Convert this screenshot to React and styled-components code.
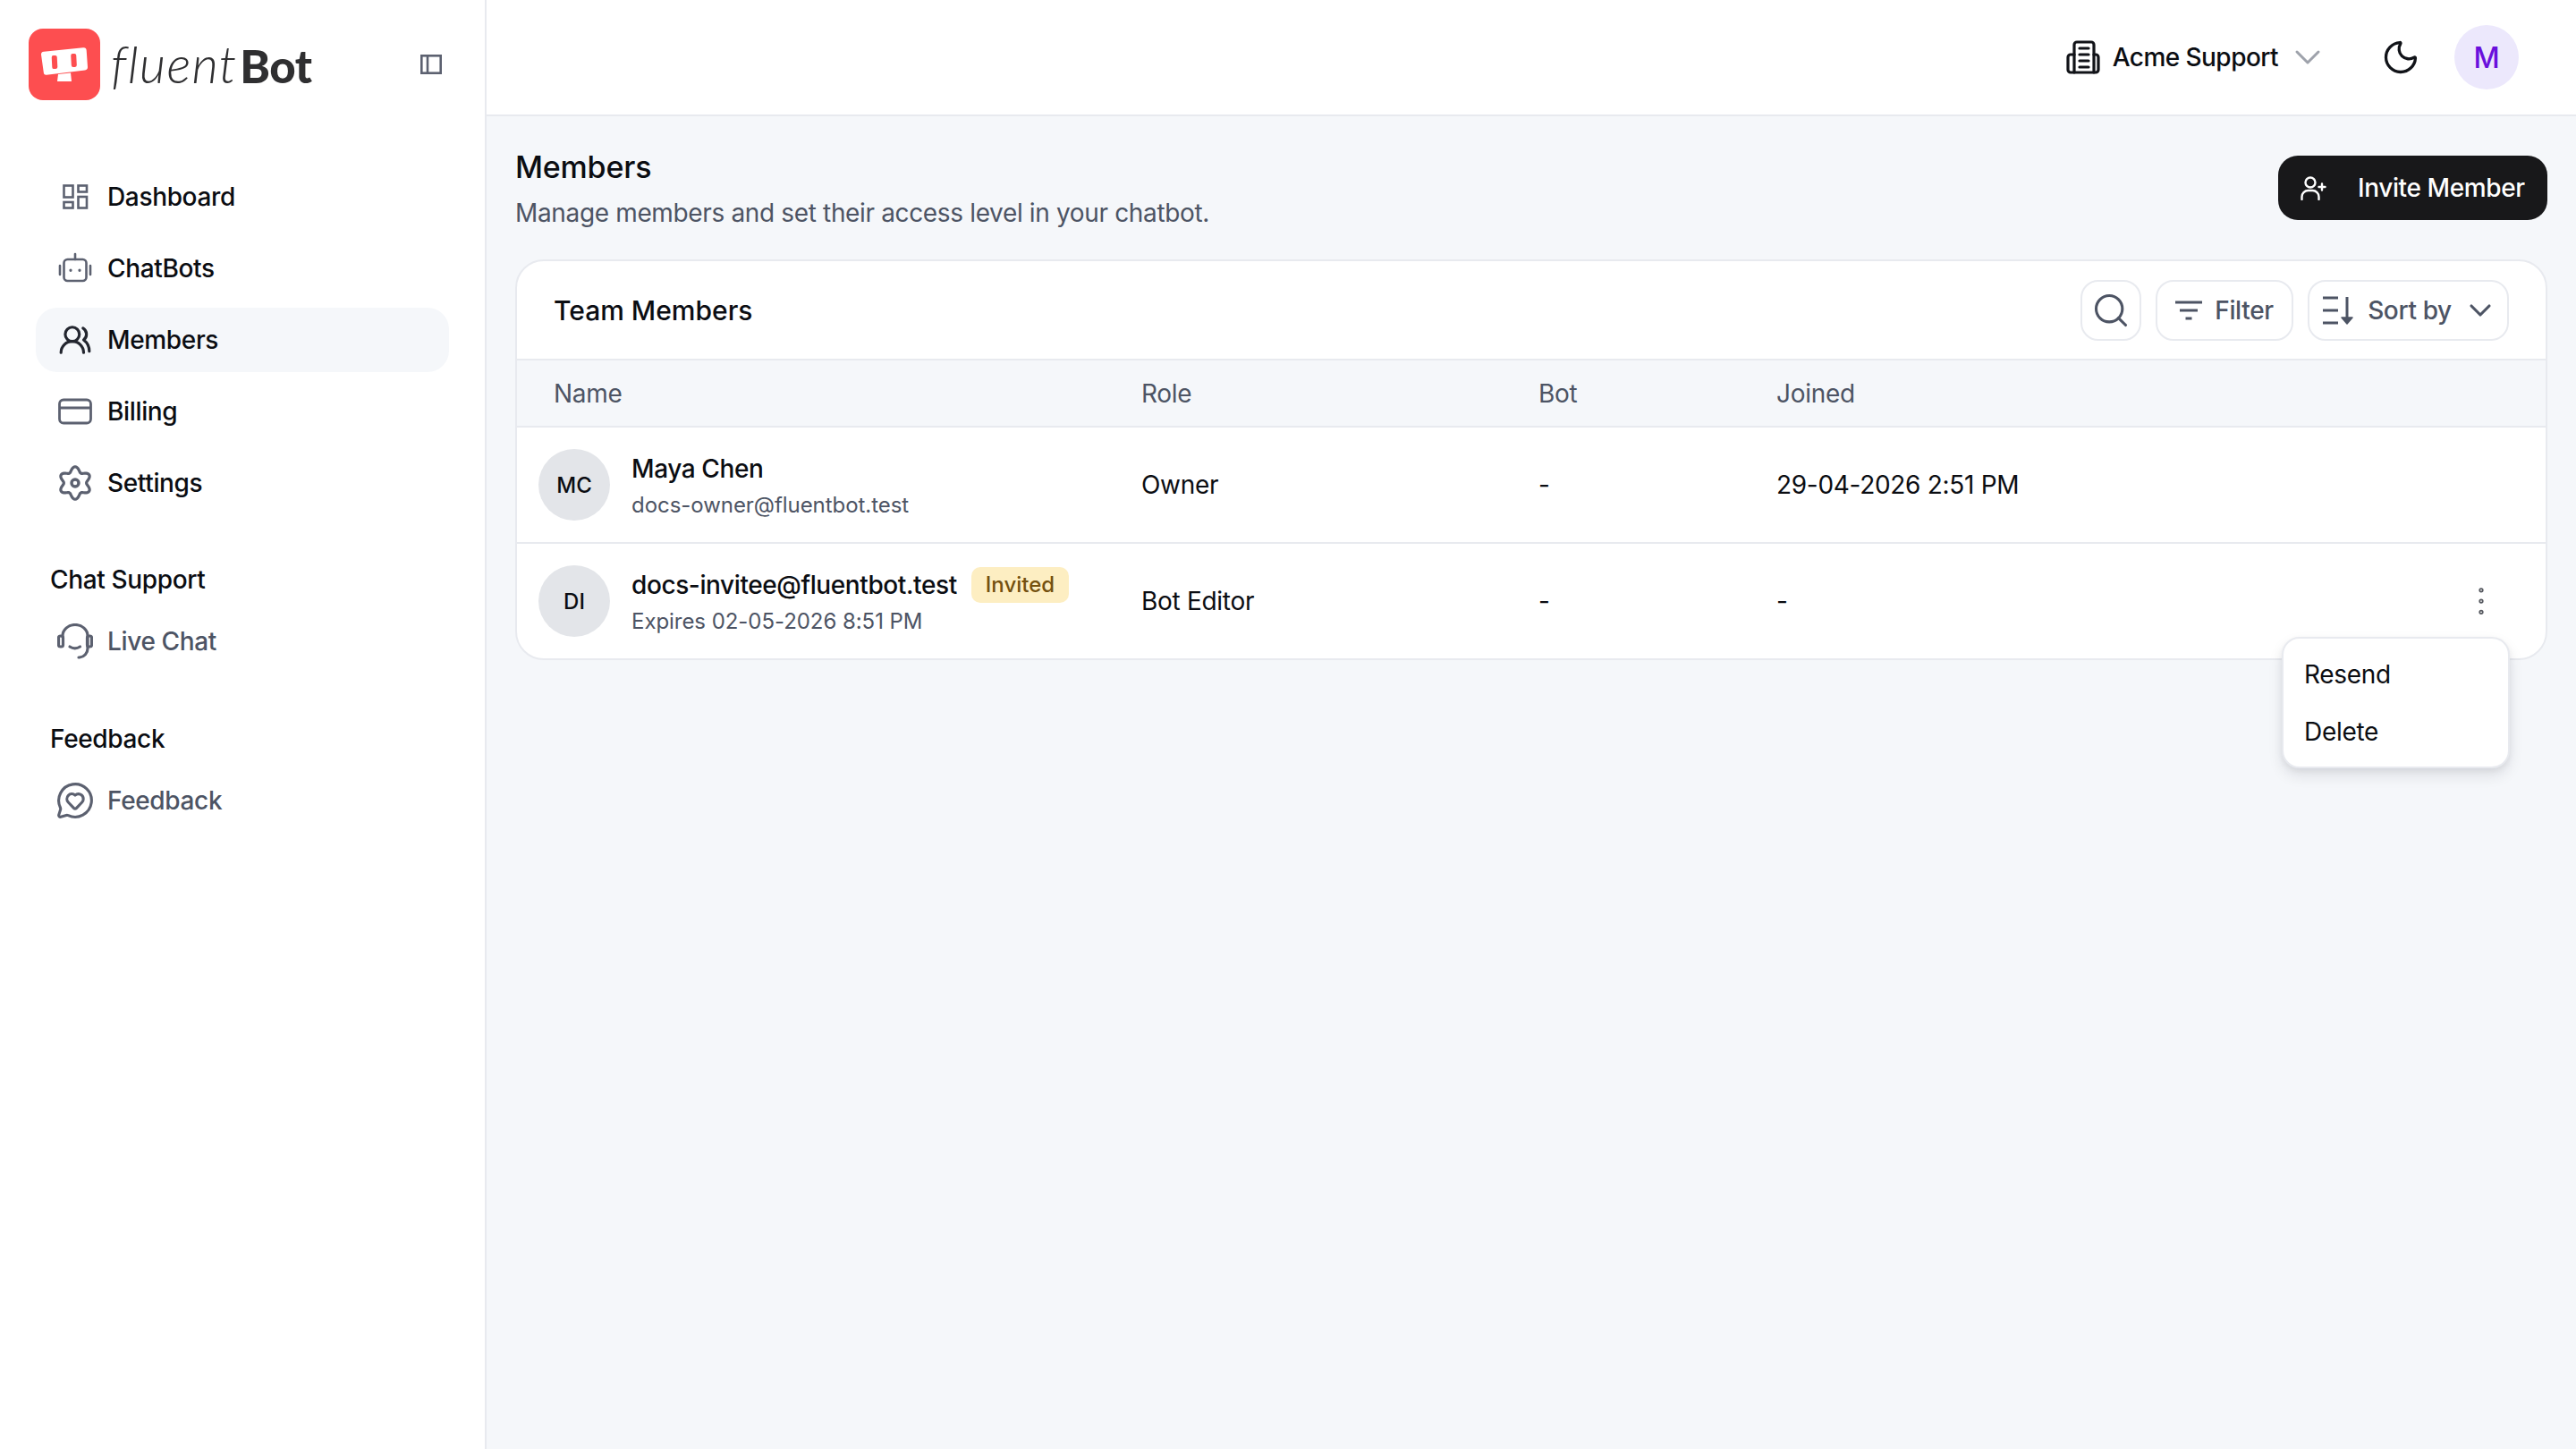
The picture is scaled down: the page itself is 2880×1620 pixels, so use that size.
import React from "react";
import styled, { createGlobalStyle } from "styled-components";
import { UsersRound, MessageCircleHeart, Moon, ChevronDown, Search, EllipsisVertical } from "lucide-react";

const Global = createGlobalStyle`
  html, body { margin: 0; padding: 0; background: #f5f7fa; }
  * { box-sizing: border-box; }
  body {
    font-family: Inter, "Liberation Sans", sans-serif;
    color: #0b0d12;
    letter-spacing: -0.35px;
    -webkit-font-smoothing: antialiased;
  }
`;

const Shell = styled.div`
  display: grid;
  grid-template-columns: 544px 1fr;
  width: 2880px;
  height: 1620px;
  overflow: hidden;
`;
const Sidebar = styled.aside`
  background: #fff;
  border-right: 2px solid #e8eaef;
  padding: 32px 40px 0 32px;
  display: flex;
  flex-direction: column;
`;
const Brand = styled.div`
  display: flex;
  align-items: center;
  height: 80px;
  margin-bottom: 72px;
`;
const BrandName = styled.div`
  margin-left: 12px;
  font-family: Lato, "Open Sans", sans-serif;
  font-size: 52px;
  line-height: 80px;
  color: #2f2f31;
  flex: 1;
`;
const Fluent = styled.span`
  font-size: 57px;
  font-style: italic;
  font-weight: 300;
  letter-spacing: 1.200px;
  margin-right: 3px;
`;
const Bold = styled.span`
  font-size: 51px;
  font-weight: 900;
  letter-spacing: -0.5px;
`;
const Collapse = styled.svg`
  width: 24px;
  height: 22px;
  margin-right: 8px;
  flex: none;
`;
const Nav = styled.nav`
  display: flex;
  flex-direction: column;
  gap: 8px;
  margin-left: 8px;
`;
const NavItem = styled.div`
  display: flex;
  align-items: center;
  height: 72px;
  border-radius: 24px;
  padding-left: 25px;
  gap: 17px;
  font-size: 28px;
  font-weight: 500;
  background: ${(p) => (p.$active ? "#f5f7fa" : "transparent")};
  color: ${(p) => (p.$muted ? "#4d5464" : "#0b0d12")};
`;
const IconSlot = styled.span`
  width: 38px;
  height: 38px;
  flex: none;
  display: flex;
  align-items: center;
  justify-content: center;
  color: ${(p) => (p.$active ? "#23262f" : "#5c6170")};
  svg { flex: none; }
`;
const SectionTitle = styled.div`
  font-size: 28px;
  font-weight: 500;
  line-height: 40px;
  margin-left: 24px;
  margin-top: ${(p) => p.$top}px;
  margin-bottom: 13px;
`;
const Content = styled.div`
  display: flex;
  flex-direction: column;
  min-width: 0;
`;
const TopBar = styled.header`
  height: 130px;
  background: #fff;
  border-bottom: 2px solid #e8eaef;
  display: flex;
  align-items: center;
  justify-content: flex-end;
  padding-right: 64px;
`;
const Workspace = styled.div`
  display: flex;
  align-items: center;
  font-size: 28px;
  font-weight: 500;
  letter-spacing: -0.55px;
  margin-right: 58px;
`;
const WorkspaceName = styled.span`
  margin-left: 14px;
  margin-right: 9px;
`;
const Avatar = styled.div`
  width: 72px;
  height: 72px;
  border-radius: 50%;
  background: #ece8fc;
  color: #6a10dc;
  font-size: 32px;
  font-weight: 500;
  display: flex;
  align-items: center;
  justify-content: center;
  margin-left: 38px;
`;
const Main = styled.main`
  padding: 37px 32px 0;
`;
const PageHead = styled.div`
  display: flex;
  justify-content: space-between;
  align-items: flex-start;
  margin-bottom: 32px;
`;
const Title = styled.h1`
  margin: 0;
  font-size: 34px;
  line-height: 40px;
  font-weight: 500;
  letter-spacing: -0.2px;
`;
const Subtitle = styled.p`
  margin: 11px 0 0;
  font-size: 28px;
  line-height: 40px;
  color: #4d5464;
`;
const PrimaryButton = styled.button`
  margin-top: 7px;
  width: 301px;
  height: 72px;
  border: 0;
  border-radius: 22px;
  background: #18181a;
  color: #fff;
  font: 500 28px Inter, sans-serif;
  letter-spacing: -0.4px;
  display: flex;
  align-items: center;
  padding-left: 25px;
  gap: 34px;
`;
const Card = styled.section`
  background: #fff;
  border: 2px solid #e8eaef;
  border-radius: 32px;
`;
const CardHead = styled.div`
  height: 111px;
  display: flex;
  align-items: center;
  padding: 0 41px;
  border-bottom: 2px solid #e8eaef;
`;
const CardTitle = styled.h2`
  margin: 0;
  font-size: 30px;
  font-weight: 500;
  flex: 1;
  letter-spacing: 0;
`;
const Tools = styled.div`
  display: flex;
  gap: 16px;
`;
const ToolButton = styled.button`
  height: 68px;
  border: 2px solid #e8eaef;
  border-radius: 20px;
  background: #fff;
  color: #4d5464;
  font: 500 28px Inter, sans-serif;
  letter-spacing: -0.35px;
  display: flex;
  align-items: center;
  justify-content: center;
  gap: 14px;
  width: ${(p) => p.$w}px;
  padding: 0;
`;
const SortChevron = styled(ChevronDown)`
  margin: 0 -3px 0 -2px;
`;
const Row = styled.div`
  position: relative;
  display: grid;
  grid-template-columns: 698px 444px 266px 1fr 93px;
  align-items: center;
  height: ${(p) => p.$h}px;
  font-size: 28px;
  letter-spacing: -0.3px;
  border-bottom: ${(p) => (p.$last ? "0" : "2px solid #e8eaef")};
`;
const HeadRow = styled(Row)`
  background: #f5f7fa;
  color: #4d5464;
`;
const FirstHead = styled.div`
  padding-left: 41px;
`;
const Person = styled.div`
  display: flex;
  align-items: center;
  padding-left: 24px;
  gap: 24px;
`;
const Initials = styled.div`
  width: 80px;
  height: 80px;
  border-radius: 50%;
  background: #e3e5e9;
  font-size: 24px;
  font-weight: 500;
  letter-spacing: 0;
  display: flex;
  align-items: center;
  justify-content: center;
  flex: none;
`;
const PersonText = styled.div`
  display: flex;
  flex-direction: column;
  gap: 3px;
  padding-top: 3px;
`;
const PersonName = styled.div`
  display: flex;
  align-items: center;
  gap: 16px;
  font-size: 28px;
  font-weight: 500;
  line-height: 40px;
  letter-spacing: -0.4px;
`;
const PersonSub = styled.div`
  font-size: 24px;
  line-height: 36px;
  letter-spacing: -0.05px;
  color: #4d5464;
`;
const Badge = styled.span`
  height: 40px;
  padding: 0 16px;
  border-radius: 10px;
  background: #fdeec2;
  color: #74500f;
  font-size: 24px;
  font-weight: 500;
  letter-spacing: 0;
  display: inline-flex;
  align-items: center;
`;
const Cell = styled.div``;
const Actions = styled.div`
  display: flex;
  color: #55585f;
`;
const Menu = styled.div`
  position: absolute;
  top: 104px;
  right: 40px;
  width: 255px;
  height: 147px;
  padding: 8px 0;
  background: #fff;
  border: 2px solid #e8eaef;
  border-radius: 20px;
  box-shadow: 0 8px 16px rgba(20, 24, 40, 0.1), 0 3px 6px rgba(20, 24, 40, 0.06);
`;
const MenuItem = styled.div`
  height: 64px;
  display: flex;
  align-items: center;
  padding-left: 23px;
  font-size: 28px;
`;

const gearPath = (() => {
  const pts = [];
  for (let i = 0; i < 96; i += 1) {
    const a = (i / 96) * Math.PI * 2;
    const r = 15.4 + 2.8 * Math.cos(6 * a);
    pts.push(`${(20 + r * Math.sin(a)).toFixed(2)} ${(20 - r * Math.cos(a)).toFixed(2)}`);
  }
  return `M${pts.join("L")}Z`;
})();

const DashboardIcon = () => (
  <svg width="30" height="30" viewBox="0 0 30 30" fill="none" stroke="currentColor" strokeWidth="2.6">
    <rect x="2.500" y="2.500" width="10" height="13" />
    <rect x="18.500" y="2.500" width="9.500" height="7" />
    <rect x="2.500" y="21" width="10" height="6.500" />
    <rect x="18.500" y="15" width="9.500" height="12.500" />
  </svg>
);
const BotIcon = () => (
  <svg width="38" height="36" viewBox="0 0 38 36" fill="none" stroke="currentColor" strokeWidth="2.600" strokeLinecap="round" strokeLinejoin="round">
    <path d="M19 2v6" />
    <rect x="6.500" y="8" width="25" height="24" rx="4" />
    <path d="M2 15v10M36 15v10" />
    <path d="M14 20v.3M24 20v.3" strokeWidth="3.200" />
  </svg>
);
const BillingIcon = () => (
  <svg width="38" height="30" viewBox="0 0 38 30" fill="none" stroke="currentColor" strokeWidth="2.800">
    <rect x="1.500" y="2" width="35" height="26" rx="4.500" />
    <path d="M1.500 11h35" />
  </svg>
);
const GearIcon = () => (
  <svg width="40" height="40" viewBox="0 0 40 40" fill="none" stroke="currentColor" strokeWidth="3.200" strokeLinejoin="round">
    <path d={gearPath} />
    <circle cx="20" cy="20" r="4" strokeWidth="3.400" />
  </svg>
);
const HeadsetIcon = () => (
  <svg width="40" height="40" viewBox="0 0 40 40" fill="none" stroke="currentColor" strokeWidth="3.200" strokeLinecap="round" strokeLinejoin="round">
    <path d="M6 15v-1a14 12.500 0 0 1 28 0v14a10 10 0 0 1-9 10h-1" />
    <rect x="1.500" y="14" width="5" height="12" rx="2" />
    <rect x="33.500" y="14" width="5" height="12" rx="2" />
    <path d="M14 26c3.500 2.200 8 2.200 11.500 0" />
  </svg>
);
const BuildingIcon = () => (
  <svg width="38" height="38" viewBox="0 0 38 38" fill="none" stroke="#111318" strokeWidth="3.200" strokeLinecap="round" strokeLinejoin="round">
    <path d="M9 36V5a3 3 0 0 1 3-3h16a3 3 0 0 1 3 3v31" />
    <path d="M9 16H5a3 3 0 0 0-3 3v14a3 3 0 0 0 3 3h28a3 3 0 0 0 3-3V19a3 3 0 0 0-3-3h-2" />
    <path d="M15 9h10M15 16h10M15 23h10M15 30h10" />
  </svg>
);
const SortIcon = () => (
  <svg width="38" height="36" viewBox="0 0 38 36" fill="none" stroke="#4d5464" strokeWidth="3" strokeLinejoin="round">
    <path d="M2 4h17M2 18h17M2 32h17" />
    <path d="M29 3v24" />
    <path d="M23 26h12l-6 7z" fill="#4d5464" strokeWidth="1.500" />
  </svg>
);
const FilterIcon = () => (
  <svg width="30" height="24" viewBox="0 0 30 24" fill="none" stroke="#4d5464" strokeWidth="2.800">
    <path d="M0 3h30M5 12h20M11.500 21h7" />
  </svg>
);
const InviteIcon = () => (
  <svg width="30" height="28" viewBox="0 0 30 28" fill="none" stroke="#fff" strokeWidth="2.400" strokeLinecap="round">
    <circle cx="11" cy="8" r="5.500" />
    <path d="M1.500 27v-3a7 7 0 0 1 7-7h5a7 7 0 0 1 7 7v3" />
    <path d="M24 9.500v7M20.500 13h7" />
  </svg>
);
const LogoMark = () => (
  <svg width="80" height="80" viewBox="0 0 80 80" style={{ flex: "none" }}>
    <rect width="80" height="80" rx="16" fill="#fd4e50" />
    <path d="M14 29 Q13.800 26 17 25.700 L61 21.300 Q64.500 21 64.700 24.500 L66 43 Q66.200 46 63 46.400 L20 51.700 Q17 52 16.800 49 Z" fill="#fff" />
    <rect x="26" y="30" width="6" height="15" rx="2" fill="#fd4e50" transform="rotate(-3 29 37)" />
    <rect x="47.500" y="28" width="6" height="15" rx="2" fill="#fd4e50" transform="rotate(-3 50 35)" />
    <path d="M33 51 L47 49.500 L48 59 L32 59 Z" fill="#fff" />
  </svg>
);

const App = () => (
  <>
    <Global />
    <Shell>
      <Sidebar>
        <Brand>
          <LogoMark />
          <BrandName><Fluent>fluent</Fluent><Bold>Bot</Bold></BrandName>
          <Collapse viewBox="0 0 24 22" fill="none" stroke="#5c6170" strokeWidth="2.600">
            <rect x="1.300" y="1.300" width="21.400" height="19.400" />
            <path d="M8 2v18" />
          </Collapse>
        </Brand>
        <Nav>
          <NavItem><IconSlot><DashboardIcon /></IconSlot>Dashboard</NavItem>
          <NavItem><IconSlot><BotIcon /></IconSlot>ChatBots</NavItem>
          <NavItem $active><IconSlot $active><UsersRound size={38} strokeWidth={2} /></IconSlot>Members</NavItem>
          <NavItem><IconSlot><BillingIcon /></IconSlot>Billing</NavItem>
          <NavItem><IconSlot><GearIcon /></IconSlot>Settings</NavItem>
        </Nav>
        <SectionTitle $top={52}>Chat Support</SectionTitle>
        <Nav>
          <NavItem $muted><IconSlot><HeadsetIcon /></IconSlot>Live Chat</NavItem>
        </Nav>
        <SectionTitle $top={53}>Feedback</SectionTitle>
        <Nav>
          <NavItem $muted><IconSlot><MessageCircleHeart size={44} strokeWidth={1.7} /></IconSlot>Feedback</NavItem>
        </Nav>
      </Sidebar>
      <Content>
        <TopBar>
          <Workspace>
            <BuildingIcon />
            <WorkspaceName>Acme Support</WorkspaceName>
            <ChevronDown size={48} strokeWidth={1.5} color="#9ea2ab" />
          </Workspace>
          <Moon size={44} strokeWidth={1.8} color="#111318" />
          <Avatar>M</Avatar>
        </TopBar>
        <Main>
          <PageHead>
            <div>
              <Title>Members</Title>
              <Subtitle>Manage members and set their access level in your chatbot.</Subtitle>
            </div>
            <PrimaryButton><InviteIcon />Invite Member</PrimaryButton>
          </PageHead>
          <Card>
            <CardHead>
              <CardTitle>Team Members</CardTitle>
              <Tools>
                <ToolButton $w={68}><Search size={44} strokeWidth={1.7} /></ToolButton>
                <ToolButton $w={154}><FilterIcon />Filter</ToolButton>
                <ToolButton $w={225}><SortIcon />Sort by<SortChevron size={40} strokeWidth={1.9} /></ToolButton>
              </Tools>
            </CardHead>
            <HeadRow $h={75}>
              <FirstHead>Name</FirstHead>
              <Cell>Role</Cell>
              <Cell>Bot</Cell>
              <Cell>Joined</Cell>
            </HeadRow>
            <Row $h={130}>
              <Person>
                <Initials>MC</Initials>
                <PersonText>
                  <PersonName>Maya Chen</PersonName>
                  <PersonSub>docs-owner@fluentbot.test</PersonSub>
                </PersonText>
              </Person>
              <Cell>Owner</Cell>
              <Cell>-</Cell>
              <Cell>29-04-2026 2:51 PM</Cell>
            </Row>
            <Row $h={128} $last>
              <Person>
                <Initials>DI</Initials>
                <PersonText>
                  <PersonName>docs-invitee@fluentbot.test<Badge>Invited</Badge></PersonName>
                  <PersonSub>Expires 02-05-2026 8:51 PM</PersonSub>
                </PersonText>
              </Person>
              <Cell>Bot Editor</Cell>
              <Cell>-</Cell>
              <Cell>-</Cell>
              <Actions><EllipsisVertical size={42} strokeWidth={1} /></Actions>
              <Menu>
                <MenuItem>Resend</MenuItem>
                <MenuItem>Delete</MenuItem>
              </Menu>
            </Row>
          </Card>
        </Main>
      </Content>
    </Shell>
  </>
);

export default App;
